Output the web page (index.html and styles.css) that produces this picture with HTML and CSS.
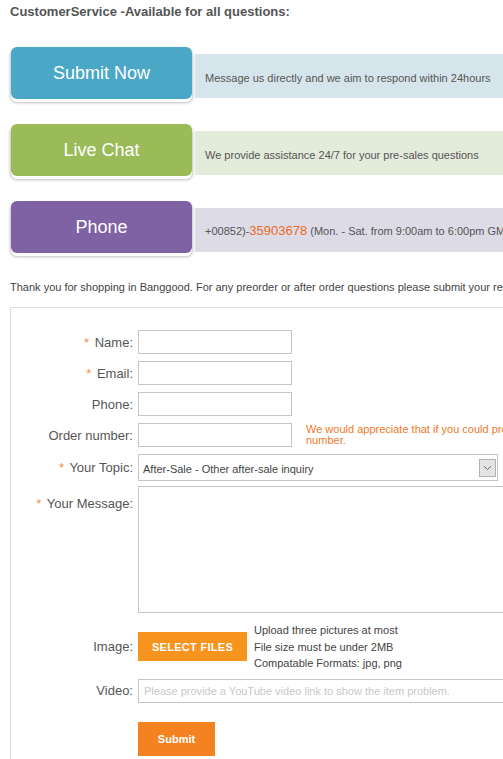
FILE: index.html
```html
<!DOCTYPE html>
<html lang="en">
<head>
  <meta charset="UTF-8">
  <meta name="viewport" content="width=device-width, initial-scale=1.0">
  <title>Customer Service</title>
  <link rel="stylesheet" href="styles.css">
</head>
<body>
  <div class="page">
    <h3 class="title">CustomerService -Available for all questions:</h3>

    <div class="channels">
      <div class="channel channel-mail">
        <a class="channel-btn" href="#ticket">Submit Now</a>
        <div class="channel-info"><span>Message us directly and we aim to respond within 24hours</span></div>
      </div>
      <div class="channel channel-chat">
        <a class="channel-btn" href="#">Live Chat</a>
        <div class="channel-info"><span>We provide assistance 24/7 for your pre-sales questions</span></div>
      </div>
      <div class="channel channel-phone">
        <a class="channel-btn" href="#">Phone</a>
        <div class="channel-info"><span>+00852)-<span class="tel">35903678</span> (Mon. - Sat. from 9:00am to 6:00pm GMT+8)</span></div>
      </div>
    </div>

    <p class="intro">Thank you for shopping in Banggood. For any preorder or after order questions please submit your request below and we will reply soon.</p>

    <form class="ticket" id="ticket">
      <div class="field">
        <label class="field-label"><span class="req">*</span> Name:</label>
        <input class="text short" type="text">
      </div>
      <div class="field">
        <label class="field-label"><span class="req">*</span> Email:</label>
        <input class="text short" type="text">
      </div>
      <div class="field">
        <label class="field-label">Phone:</label>
        <input class="text short" type="text">
      </div>
      <div class="field">
        <label class="field-label">Order number:</label>
        <input class="text short" type="text">
        <p class="note">We would appreciate that if you could provide your order number.</p>
      </div>
      <div class="field">
        <label class="field-label"><span class="req">*</span> Your Topic:</label>
        <div class="select">
          <select>
            <option>After-Sale - Other after-sale inquiry</option>
          </select>
          <span class="select-arrow">
            <svg width="9" height="6" viewBox="0 0 9 6"><path d="M1 1.2 L4.5 4.6 L8 1.2" fill="none" stroke="#666" stroke-width="1"/></svg>
          </span>
        </div>
      </div>
      <div class="field field-top">
        <label class="field-label"><span class="req">*</span> Your Message:</label>
        <textarea class="message"></textarea>
      </div>
      <div class="field field-image">
        <label class="field-label">Image:</label>
        <button class="btn-files" type="button">SELECT FILES</button>
        <ul class="upload-tips">
          <li>Upload three pictures at most</li>
          <li>File size must be under 2MB</li>
          <li>Compatable Formats: jpg, png</li>
        </ul>
      </div>
      <div class="field">
        <label class="field-label">Video:</label>
        <input class="text wide" type="text" placeholder="Please provide a YouTube video link to show the item problem.">
      </div>
      <div class="field field-submit">
        <span class="field-label"></span>
        <button class="btn-submit" type="submit">Submit</button>
      </div>
    </form>
  </div>
</body>
</html>
```

FILE: styles.css
```css
body {
  margin: 0;
  font-family: "Liberation Sans", Arial, sans-serif;
  color: #555;
  background: #fff;
  overflow: hidden;
}
.page {
  width: 780px;
  padding: 4px 10px 0;
}
.title {
  margin: 0;
  font-size: 13px;
  line-height: 16px;
  font-weight: bold;
  color: #555;
}
.channels {
  margin-top: 27px;
  display: flex;
  flex-direction: column;
  gap: 25px;
}
.channel {
  display: flex;
  align-items: flex-end;
}
.channel-btn {
  width: 181px;
  height: 52px;
  margin-left: 1px;
  border-radius: 6px;
  color: #fff;
  font-size: 18px;
  text-decoration: none;
  display: flex;
  align-items: center;
  justify-content: center;
  box-shadow: 0 3px 0 #fff, 0 3px 3px 1px rgba(0, 0, 0, 0.25);
}
.channel-info {
  flex: 1;
  height: 44px;
  margin: 0 0 1px 3px;
  padding: 4px 0 0 10px;
  box-sizing: border-box;
  font-size: 11px;
  line-height: 14px;
  display: flex;
  align-items: center;
  white-space: nowrap;
}
.channel-mail .channel-btn { background: #4aa8c6; }
.channel-mail .channel-info { background: #d6e5eb; }
.channel-chat .channel-btn { background: #9bbb59; }
.channel-chat .channel-info { background: #e3ebdb; }
.channel-phone .channel-btn { background: #7f62a3; }
.channel-phone .channel-info { background: #dcdbe6; padding-top: 1px; }
.tel {
  color: #f06a1d;
  font-size: 13px;
}
.intro {
  margin: 27px 0 13px;
  font-size: 11px;
  line-height: 14px;
  color: #444;
  white-space: nowrap;
}
.ticket {
  width: 760px;
  border: 1px solid #ddd;
  border-right: none;
  padding-top: 22px;
  height: 500px;
  display: flex;
  flex-direction: column;
  gap: 7px;
}
.field {
  display: flex;
  align-items: center;
  gap: 5px;
}
.field-top {
  align-items: flex-start;
  margin-top: -2px;
}
.field-top .field-label {
  padding-top: 10px;
}
.field-image {
  margin-top: 2px;
}
.field-label {
  width: 122px;
  flex-shrink: 0;
  text-align: right;
  font-size: 13px;
  color: #555;
}
.req {
  color: #f0904a;
  margin-right: 2px;
}
.text {
  height: 24px;
  box-sizing: border-box;
  border: 1px solid #c4c4c4;
  padding: 0 5px;
  font-family: inherit;
  font-size: 11px;
  color: #333;
}
.text.short { width: 154px; }
.text.wide { width: 560px; }
.text::placeholder { color: #c8c8c8; }
.note {
  align-self: flex-start;
  width: 300px;
  margin: 1px 0 0 9px;
  font-size: 11px;
  line-height: 11px;
  color: #ec7a2c;
}
.select {
  position: relative;
  width: 360px;
  height: 27px;
}
.select select {
  appearance: none;
  width: 100%;
  height: 100%;
  border: 1px solid #c4c4c4;
  background: #fff;
  padding: 2px 4px 0;
  font-family: inherit;
  font-size: 11px;
  color: #444;
  border-radius: 0;
}
.select-arrow {
  position: absolute;
  right: 2px;
  top: 5px;
  width: 15px;
  height: 16px;
  border: 1px solid #b0b0b0;
  background: #e4e4e4;
  display: flex;
  align-items: center;
  justify-content: center;
}
.message {
  width: 560px;
  height: 127px;
  box-sizing: border-box;
  border: 1px solid #c4c4c4;
  resize: none;
}
.btn-files {
  width: 109px;
  height: 29px;
  border: none;
  background: #f7941d;
  color: #fff;
  font-family: inherit;
  font-size: 11px;
  font-weight: bold;
  letter-spacing: 0.3px;
}
.upload-tips {
  list-style: none;
  margin: 0 0 0 2px;
  padding: 0;
  font-size: 11px;
  line-height: 16.5px;
  color: #444;
}
.field-submit {
  margin-top: 12px;
}
.btn-submit {
  width: 77px;
  height: 34px;
  border: none;
  background: #f58220;
  color: #fff;
  font-family: inherit;
  font-size: 11px;
  font-weight: bold;
}
```
